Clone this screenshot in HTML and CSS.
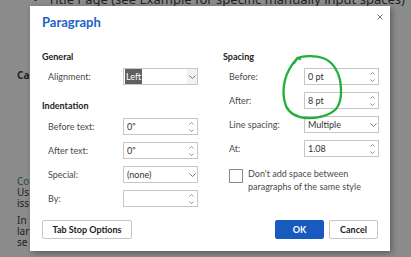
FILE: index.html
```html
<!DOCTYPE html>
<html>
<head>
<meta charset="utf-8">
<link rel="stylesheet" href="styles.css">
</head>
<body>
<div class="doc">
  <div class="doc-bullet"><span class="dot">•</span>Title Page (see Example for specific manually input spaces)</div>
  <div class="doc-heading">Ca</div>
  <div class="doc-green">Co</div>
  <div class="doc-line">Us</div>
  <div class="doc-line">iss</div>
  <div class="doc-line doc-gap">In</div>
  <div class="doc-line">lar</div>
  <div class="doc-line">se</div>
</div>

<div class="dialog">
  <div class="header">
    <div class="title">Paragraph</div>
    <svg class="close" width="6" height="6" viewBox="0 0 6 6"><path d="M0.5 0.5L5.5 5.5M5.5 0.5L0.5 5.5" stroke="#666" stroke-width="0.9"/></svg>
  </div>
  <div class="columns">
    <div class="col">
      <div class="heading">General</div>
      <div class="row">
        <span class="label">Alignment:</span>
        <div class="field select"><span class="sel-text">Left</span><span class="chev-box"><svg width="7" height="4" viewBox="0 0 7 4"><path d="M0.5 0.5L3.5 3.5L6.5 0.5" fill="none" stroke="#666" stroke-width="0.9"/></svg></span></div>
      </div>
      <div class="heading sec2">Indentation</div>
      <div class="row">
        <span class="label">Before text:</span>
        <div class="field spin"><span class="val">0"</span><span class="arrows"><svg width="5" height="3" viewBox="0 0 5 3"><path d="M0.5 2.5L2.5 0.5L4.5 2.5" fill="none" stroke="#777" stroke-width="0.8"/></svg><svg width="5" height="3" viewBox="0 0 5 3"><path d="M0.5 0.5L2.5 2.5L4.5 0.5" fill="none" stroke="#777" stroke-width="0.8"/></svg></span></div>
      </div>
      <div class="row">
        <span class="label">After text:</span>
        <div class="field spin"><span class="val">0"</span><span class="arrows"><svg width="5" height="3" viewBox="0 0 5 3"><path d="M0.5 2.5L2.5 0.5L4.5 2.5" fill="none" stroke="#777" stroke-width="0.8"/></svg><svg width="5" height="3" viewBox="0 0 5 3"><path d="M0.5 0.5L2.5 2.5L4.5 0.5" fill="none" stroke="#777" stroke-width="0.8"/></svg></span></div>
      </div>
      <div class="row">
        <span class="label">Special:</span>
        <div class="field select"><span class="val">(none)</span><span class="chev-box plain"><svg width="7" height="4" viewBox="0 0 7 4"><path d="M0.5 0.5L3.5 3.5L6.5 0.5" fill="none" stroke="#666" stroke-width="0.9"/></svg></span></div>
      </div>
      <div class="row">
        <span class="label">By:</span>
        <div class="field spin"><span class="val"></span><span class="arrows"><svg width="5" height="3" viewBox="0 0 5 3"><path d="M0.5 2.5L2.5 0.5L4.5 2.5" fill="none" stroke="#777" stroke-width="0.8"/></svg><svg width="5" height="3" viewBox="0 0 5 3"><path d="M0.5 0.5L2.5 2.5L4.5 0.5" fill="none" stroke="#777" stroke-width="0.8"/></svg></span></div>
      </div>
    </div>
    <div class="col">
      <div class="heading">Spacing</div>
      <div class="row">
        <span class="label">Before:</span>
        <div class="field spin"><span class="val">0 pt</span><span class="arrows"><svg width="5" height="3" viewBox="0 0 5 3"><path d="M0.5 2.5L2.5 0.5L4.5 2.5" fill="none" stroke="#777" stroke-width="0.8"/></svg><svg width="5" height="3" viewBox="0 0 5 3"><path d="M0.5 0.5L2.5 2.5L4.5 0.5" fill="none" stroke="#777" stroke-width="0.8"/></svg></span></div>
      </div>
      <div class="row">
        <span class="label">After:</span>
        <div class="field spin"><span class="val">8 pt</span><span class="arrows"><svg width="5" height="3" viewBox="0 0 5 3"><path d="M0.5 2.5L2.5 0.5L4.5 2.5" fill="none" stroke="#777" stroke-width="0.8"/></svg><svg width="5" height="3" viewBox="0 0 5 3"><path d="M0.5 0.5L2.5 2.5L4.5 0.5" fill="none" stroke="#777" stroke-width="0.8"/></svg></span></div>
      </div>
      <div class="row">
        <span class="label">Line spacing:</span>
        <div class="field select"><span class="val">Multiple</span><span class="chev-box plain"><svg width="7" height="4" viewBox="0 0 7 4"><path d="M0.5 0.5L3.5 3.5L6.5 0.5" fill="none" stroke="#666" stroke-width="0.9"/></svg></span></div>
      </div>
      <div class="row">
        <span class="label">At:</span>
        <div class="field spin"><span class="val">1.08</span><span class="arrows"><svg width="5" height="3" viewBox="0 0 5 3"><path d="M0.5 2.5L2.5 0.5L4.5 2.5" fill="none" stroke="#777" stroke-width="0.8"/></svg><svg width="5" height="3" viewBox="0 0 5 3"><path d="M0.5 0.5L2.5 2.5L4.5 0.5" fill="none" stroke="#777" stroke-width="0.8"/></svg></span></div>
      </div>
      <div class="check-row">
        <span class="checkbox"></span>
        <span class="check-text">Don't add space between<br>paragraphs of the same style</span>
      </div>
    </div>
  </div>
  <div class="footer">
    <button class="btn tab">Tab Stop Options</button>
    <div class="actions">
      <button class="btn primary">OK</button>
      <button class="btn cancel">Cancel</button>
    </div>
  </div>
</div>

<svg class="annotation" width="411" height="257" viewBox="0 0 411 257">
  <path d="M294 63 L297.5 58 L300 59 M297.5 58 C303 56 314 55 323 58 C331 61 337 68 340 80 C342 92 341 103 336 109 C330 115 318 119 306 118 C296 117 289 113 286 106 C283 98 283 88 285 80 C287 72 291 65 297.5 58" fill="none" stroke="#1fb03a" stroke-width="2.3" stroke-linecap="round" stroke-linejoin="round"/>
</svg>
</body>
</html>
```

FILE: styles.css
```css
* { box-sizing: border-box; }
html, body { margin: 0; padding: 0; }
body {
  width: 411px;
  height: 257px;
  overflow: hidden;
  background: #8c8c8c;
  font-family: "Lato", "Noto Sans", sans-serif;
  position: relative;
}
.doc {
  padding: 0 0 0 17px;
  color: #1f1f1f;
  font-family: "Noto Sans", sans-serif;
  font-size: 10px;
  line-height: 11px;
}
.doc-bullet {
  margin-top: -9px;
  margin-left: 16px;
  font-size: 13px;
  line-height: 16px;
}
.doc-bullet .dot { display: inline-block; width: 15px; }
.doc-heading {
  margin-top: 63px;
  font-weight: bold;
  font-size: 10px;
}
.doc-green {
  margin-top: 95px;
  color: #234e38;
}
.doc-gap { margin-top: 6px; }

.dialog {
  position: absolute;
  left: 30px;
  top: 6px;
  width: 360px;
  height: 245px;
  background: #fff;
  box-shadow: 2px 2px 6px rgba(0, 0, 0, 0.35);
  display: flex;
  flex-direction: column;
  padding: 7px 12px 12px 12px;
  color: #333;
  font-size: 9px;
}
.header {
  display: flex;
  justify-content: space-between;
  align-items: flex-start;
  height: 18px;
}
.title {
  color: #1e62c6;
  font-size: 13px;
  line-height: 18px;
  font-weight: bold;
}
.close { margin-top: 1px; margin-right: -5px; }
.columns {
  display: flex;
  gap: 25px;
  margin-top: 20px;
}
.col {
  width: 156px;
  display: flex;
  flex-direction: column;
}
.heading {
  font-weight: bold;
  color: #222;
  line-height: 12px;
  height: 12px;
  margin-bottom: 5px;
}
.sec2 { margin-top: 8px; margin-bottom: 6px; }
.row {
  display: flex;
  align-items: center;
  height: 17px;
  margin-bottom: 7px;
}
.label {
  width: 81px;
  padding-left: 6px;
  color: #4a4a4a;
}
.field {
  width: 75px;
  height: 17px;
  border: 1px solid #c6c6c6;
  display: flex;
  align-items: center;
  justify-content: space-between;
  padding: 0 4px 0 3px;
  background: #fff;
  color: #333;
}
.select { padding-right: 0; }
.sel-text {
  background: #5f5f5f;
  color: #fff;
  height: 15px;
  line-height: 15px;
  padding: 0 1px;
  margin-left: -2px;
}
.chev-box {
  width: 10px;
  height: 15px;
  display: flex;
  align-items: center;
  justify-content: center;
  background: #f2f2f2;
}
.chev-box.plain { background: transparent; }
.chev-box svg { display: block; }
.arrows {
  display: flex;
  flex-direction: column;
  gap: 4px;
  margin-right: -1px;
}
.arrows svg { display: block; }
.check-row {
  display: flex;
  gap: 5px;
  margin-top: 3px;
  padding-left: 6px;
}
.checkbox {
  width: 14px;
  height: 14px;
  border: 1px solid #8a8a8a;
  margin-top: 2px;
  flex: none;
}
.check-text {
  color: #4a4a4a;
  line-height: 13px;
}
.footer {
  margin-top: auto;
  display: flex;
  justify-content: space-between;
}
.actions { display: flex; gap: 5px; }
.btn {
  font-family: "Lato", "Noto Sans", sans-serif;
  font-size: 9px;
  font-weight: bold;
  height: 19px;
  padding: 0;
  white-space: nowrap;
  background: #fff;
  color: #222;
  border: 1px solid #c6c6c6;
  border-radius: 2px;
}
.tab { width: 90px; }
.primary {
  width: 49px;
  background: #185abd;
  border-color: #185abd;
  color: #fff;
}
.cancel { width: 49px; }
.annotation {
  position: absolute;
  left: 0;
  top: 0;
  pointer-events: none;
}
```
